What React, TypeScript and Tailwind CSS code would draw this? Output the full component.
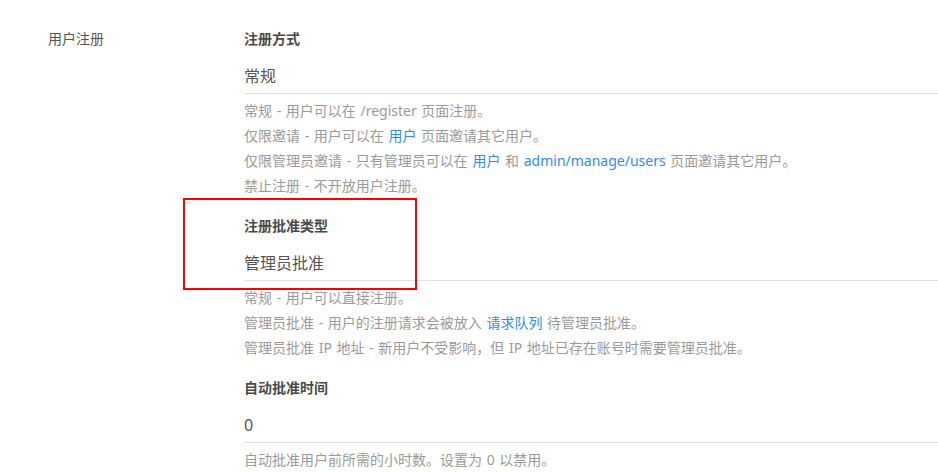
import React from "react";

type HelpLine = React.ReactNode;

type Field = {
  title: string;
  value: string;
  help: HelpLine[];
};

const Link = ({ children }: { children: React.ReactNode }) => (
  <span className="text-[#2d8cf0]">{children}</span>
);

const FIELDS: Field[] = [
  {
    title: "注册方式",
    value: "常规",
    help: [
      <>常规 - 用户可以在 /register 页面注册。</>,
      <>
        仅限邀请 - 用户可以在 <Link>用户</Link> 页面邀请其它用户。
      </>,
      <>
        仅限管理员邀请 - 只有管理员可以在 <Link>用户</Link> 和{" "}
        <Link>admin/manage/users</Link> 页面邀请其它用户。
      </>,
      <>禁止注册 - 不开放用户注册。</>,
    ],
  },
  {
    title: "注册批准类型",
    value: "管理员批准",
    help: [
      <>常规 - 用户可以直接注册。</>,
      <>
        管理员批准 - 用户的注册请求会被放入 <Link>请求队列</Link> 待管理员批准。
      </>,
      <>管理员批准 IP 地址 - 新用户不受影响，但 IP 地址已存在账号时需要管理员批准。</>,
    ],
  },
  {
    title: "自动批准时间",
    value: "0",
    help: [<>自动批准用户前所需的小时数。设置为 0 以禁用。</>],
  },
];

function SettingField({ field }: { field: Field }) {
  return (
    <div className="pb-[18px]">
      <div className="h-5 leading-5 text-[14px] font-bold text-[#4a4a4a]">{field.title}</div>
      <div className="mt-4 pb-[6px] leading-[22px] text-[16px] text-[#555] border-b border-[#e2e2e2]">
        {field.value}
      </div>
      <div className="mt-1 text-[14px] leading-[25px] text-[#9a9a9a] [word-spacing:1px]">
        {field.help.map((line, i) => (
          <div key={i} className="whitespace-nowrap">
            {line}
          </div>
        ))}
      </div>
    </div>
  );
}

export default function App() {
  return (
    <div
      className="relative w-[938px] h-[472px] overflow-hidden bg-white"
      style={{ fontFamily: '"Noto Sans", "Noto Sans CJK SC", sans-serif' }}
    >
      <div className="flex pt-[29px] pl-12">
        {/* Section label */}
        <div className="w-[196px] shrink-0 h-5 leading-5 text-[14px] text-[#555]">用户注册</div>

        {/* Fields */}
        <div className="flex-1">
          {FIELDS.map((f) => (
            <SettingField key={f.title} field={f} />
          ))}
        </div>
      </div>

      {/* Annotation box */}
      <div className="absolute left-[183px] top-[198px] w-[234px] h-[92px] border-2 border-[#ff0000]" />
    </div>
  );
}
